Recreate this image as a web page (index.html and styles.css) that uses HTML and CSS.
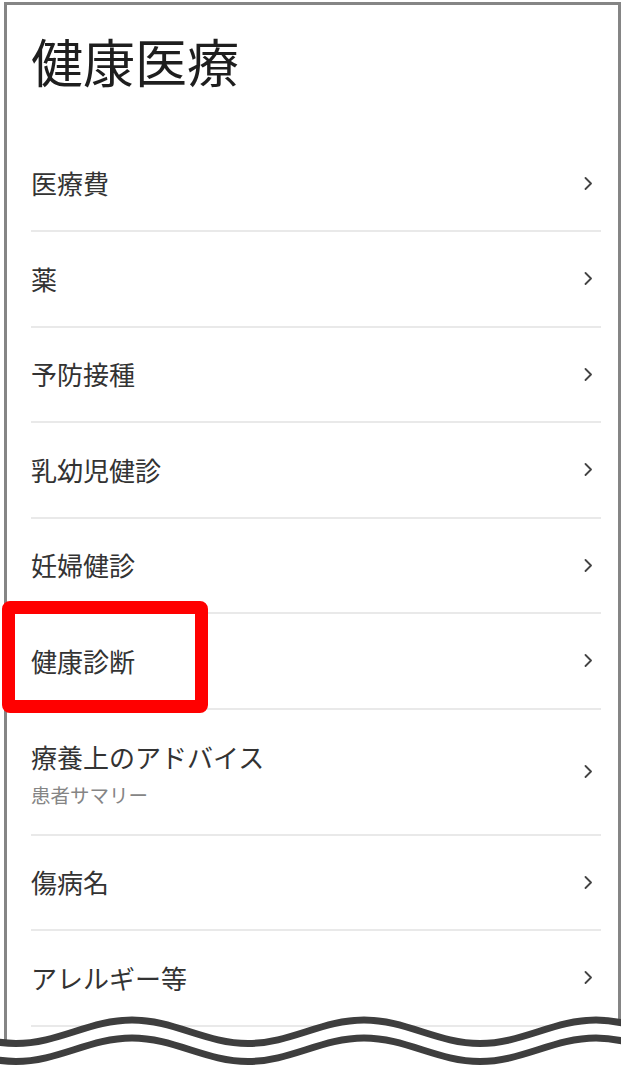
FILE: index.html
```html
<!DOCTYPE html>
<html lang="ja">
<head>
<meta charset="utf-8">
<title>健康医療</title>
<link rel="stylesheet" href="styles.css">
</head>
<body>
<div class="frame">
  <h1 class="title">健康医療</h1>
  <ul class="menu">
    <li class="item"><span class="label">医療費</span><svg class="chev" viewBox="0 0 9 13" width="9" height="13"><path d="M1.5 1 L7 6.5 L1.5 12"/></svg></li>
    <li class="item"><span class="label">薬</span><svg class="chev" viewBox="0 0 9 13" width="9" height="13"><path d="M1.5 1 L7 6.5 L1.5 12"/></svg></li>
    <li class="item"><span class="label">予防接種</span><svg class="chev" viewBox="0 0 9 13" width="9" height="13"><path d="M1.5 1 L7 6.5 L1.5 12"/></svg></li>
    <li class="item"><span class="label">乳幼児健診</span><svg class="chev" viewBox="0 0 9 13" width="9" height="13"><path d="M1.5 1 L7 6.5 L1.5 12"/></svg></li>
    <li class="item"><span class="label">妊婦健診</span><svg class="chev" viewBox="0 0 9 13" width="9" height="13"><path d="M1.5 1 L7 6.5 L1.5 12"/></svg></li>
    <li class="item"><span class="label">健康診断</span><svg class="chev" viewBox="0 0 9 13" width="9" height="13"><path d="M1.5 1 L7 6.5 L1.5 12"/></svg></li>
    <li class="item item-tall"><span class="stack"><span class="label">療養上のアドバイス</span><span class="sub">患者サマリー</span></span><svg class="chev" viewBox="0 0 9 13" width="9" height="13"><path d="M1.5 1 L7 6.5 L1.5 12"/></svg></li>
    <li class="item"><span class="label">傷病名</span><svg class="chev" viewBox="0 0 9 13" width="9" height="13"><path d="M1.5 1 L7 6.5 L1.5 12"/></svg></li>
    <li class="item"><span class="label">アレルギー等</span><svg class="chev" viewBox="0 0 9 13" width="9" height="13"><path d="M1.5 1 L7 6.5 L1.5 12"/></svg></li>
  </ul>
</div>
<div class="highlight"></div>
<svg class="cut" width="621" height="69" viewBox="0 0 621 69">
  <path class="cut-fill" d="M -100 20 C -58 20, -26 43.5, 16 43.5 C 58 43.5, 90 20, 132 20 C 174 20, 206 43.5, 248 43.5 C 290 43.5, 322 20, 364 20 C 406 20, 438 43.5, 480 43.5 C 522 43.5, 554 20, 596 20 C 638 20, 670 43.5, 712 43.5 L 712 80 L -100 80 Z"/>
  <path class="cut-line" d="M -100 20 C -58 20, -26 43.5, 16 43.5 C 58 43.5, 90 20, 132 20 C 174 20, 206 43.5, 248 43.5 C 290 43.5, 322 20, 364 20 C 406 20, 438 43.5, 480 43.5 C 522 43.5, 554 20, 596 20 C 638 20, 670 43.5, 712 43.5"/>
  <path class="cut-line" d="M -100 38 C -58 38, -26 61.5, 16 61.5 C 58 61.5, 90 38, 132 38 C 174 38, 206 61.5, 248 61.5 C 290 61.5, 322 38, 364 38 C 406 38, 438 61.5, 480 61.5 C 522 61.5, 554 38, 596 38 C 638 38, 670 61.5, 712 61.5"/>
</svg>
</body>
</html>
```
FILE: styles.css
```css
html, body {
  margin: 0;
  padding: 0;
  overflow: hidden;
  background: #ffffff;
}
body {
  position: relative;
  width: 629px;
  height: 1069px;
  font-family: "Noto Sans CJK JP", "Noto Sans", sans-serif;
  color: #333333;
}
.frame {
  box-sizing: border-box;
  margin: 2px 0 0 4px;
  width: 617px;
  height: 1120px;
  border: 3px solid #858585;
  border-bottom: none;
  background: #ffffff;
}
.title {
  margin: 0;
  padding: 30px 0 49.5px 24px;
  font-size: 52px;
  line-height: 52px;
  font-weight: 400;
  color: #1e1e1e;
}
.menu {
  list-style: none;
  margin: 0;
  padding: 0 17px 0 24px;
}
.item {
  box-sizing: border-box;
  display: flex;
  align-items: center;
  justify-content: space-between;
  height: 95.5px;
  border-bottom: 2px solid #e9e9e9;
}
.item-tall {
  height: 126px;
}
.label {
  font-size: 26px;
  line-height: 34px;
  color: #333333;
}
.stack {
  display: flex;
  flex-direction: column;
  gap: 9px;
  padding-top: 3px;
}
.sub {
  font-size: 19.5px;
  line-height: 24px;
  color: #858585;
}
.chev {
  margin-right: 8px;
  fill: none;
  stroke: #444444;
  stroke-width: 1.8;
  stroke-linecap: round;
  stroke-linejoin: round;
}
.highlight {
  position: absolute;
  box-sizing: border-box;
  left: 2px;
  top: 601px;
  width: 206px;
  height: 112px;
  border: 13px solid #ff0000;
  border-radius: 8px;
}
.cut {
  position: absolute;
  left: 0;
  top: 1000px;
}
.cut-fill {
  fill: #ffffff;
}
.cut-line {
  fill: none;
  stroke: #3e3e3e;
  stroke-width: 7;
}
```
